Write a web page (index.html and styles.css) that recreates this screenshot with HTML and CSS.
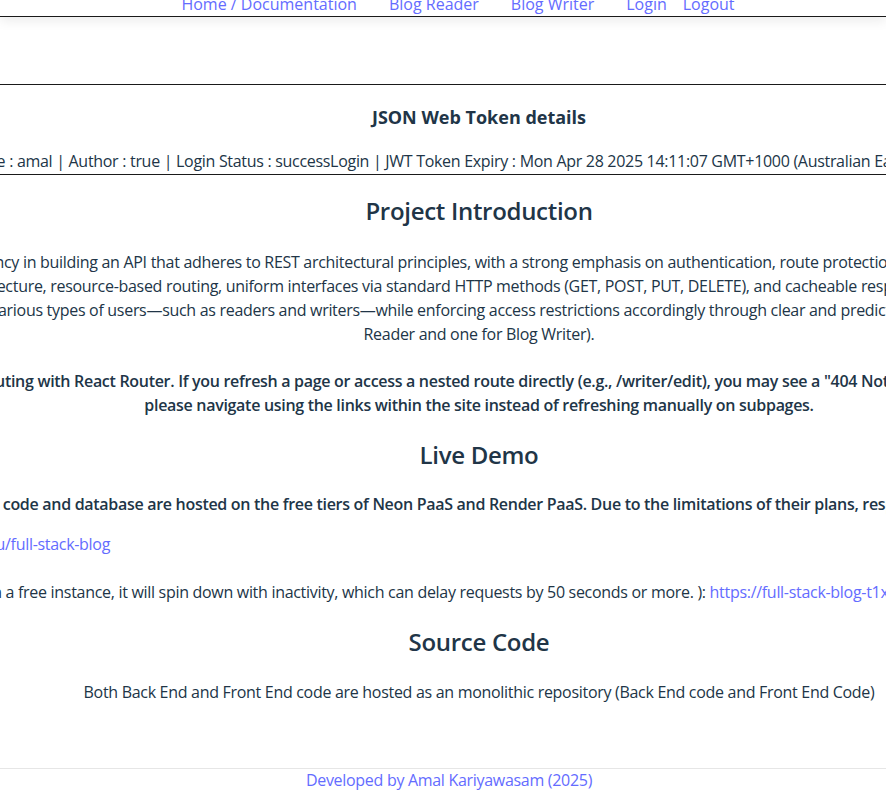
FILE: index.html
```html
<!DOCTYPE html>
<html lang="en">
<head>
<meta charset="utf-8">
<title>Full Stack Blog - Documentation</title>
<link rel="stylesheet" href="styles.css">
</head>
<body>
<nav class="topnav">
  <a href="#">Home / Documentation</a>
  <a href="#">Blog Reader</a>
  <a href="#">Blog Writer</a>
  <span class="auth">
    <a href="#">Login</a>
    <a href="#">Logout</a>
  </span>
</nav>
<div class="spacer"></div>
<section class="jwt">
  <h3 class="jwt-title">JSON Web Token details</h3>
  <div class="jwt-line">Username : amal | Author : true | Login Status : successLogin | JWT Token Expiry : Mon Apr 28 2025 14:11:07 GMT+1000 (Australian Eastern Standard AU)</div>
</section>
<main class="page">
  <h2 class="sec-title first">Project Introduction</h2>
  <div class="para">
    <span class="ln">This project demonstrates my proficiency in building an API that adheres to REST architectural principles, with a strong emphasis on authentication, route protection, and role-based access controls for all of users.</span>
    <span class="ln">The implementation showcases stateless architecture, resource-based routing, uniform interfaces via standard HTTP methods (GET, POST, PUT, DELETE), and cacheable responses with proper status codes and useful error text too.</span>
    <span class="ln">The API supports various types of users—such as readers and writers—while enforcing access restrictions accordingly through clear and predictable endpoints (one for Blog</span>
    <span class="ln">Reader and one for Blog Writer).</span>
  </div>
  <div class="para bold note">
    <span class="ln">Note: This front end uses client-side routing with React Router. If you refresh a page or access a nested route directly (e.g., /writer/edit), you may see a "404 Not Found" error. To avoid seeing this issue entirely,</span>
    <span class="ln">please navigate using the links within the site instead of refreshing manually on subpages.</span>
  </div>

  <h2 class="sec-title">Live Demo</h2>
  <div class="demo">
    <p class="demo-bold">Both the ReactJS front end and back end code and database are hosted on the free tiers of Neon PaaS and Render PaaS. Due to the limitations of their plans, responses may be slow.</p>
    <p class="demo-link">Front End Link : <a href="#">https://amalkariyawasamu/full-stack-blog</a></p>
    <p class="demo-api">Back End API (Note: Since this is hosted on a free instance, it will spin down with inactivity, which can delay requests by 50 seconds or more. ): <a href="#">https://full-stack-blog-t1xq.onrender.com</a></p>
  </div>

  <h2 class="sec-title">Source Code</h2>
  <p class="source">Both Back End and Front End code are hosted as an monolithic repository (Back End code and Front End Code)</p>
</main>
<footer class="footer">
  <a href="#">Developed by Amal Kariyawasam (2025)</a>
</footer>
</body>
</html>
```
FILE: styles.css
```css
html, body {
  margin: 0;
  padding: 0;
  overflow: hidden;
  background: #ffffff;
}
body {
  font-family: "Open Sans", "Noto Sans", sans-serif;
  font-size: 16px;
  line-height: 24px;
  letter-spacing: -0.3px;
  color: #213547;
}
a {
  color: #646cff;
  text-decoration: none;
}
.topnav {
  display: flex;
  justify-content: center;
  gap: 32px;
  margin-top: -8px;
  height: 24px;
  padding-left: 30px;
  letter-spacing: 0;
  border-bottom: 1px solid #1a1a1a;
  box-shadow: 0 4px 12px rgba(0, 0, 0, 0.08);
  position: relative;
}
.topnav .auth {
  display: flex;
  gap: 16px;
}
.spacer {
  height: 67px;
  border-bottom: 1px solid #1a1a1a;
}
.jwt {
  display: flex;
  flex-direction: column;
  align-items: center;
  padding-left: 72px;
  padding-bottom: 1px;
  border-bottom: 1px solid #1a1a1a;
}
.jwt-title {
  margin: 20px 0 0;
  font-size: 18px;
  line-height: 24px;
  font-weight: 700;
  letter-spacing: 0;
}
.jwt-line {
  margin-top: 20px;
  white-space: nowrap;
}
.page {
  display: flex;
  flex-direction: column;
  align-items: center;
  padding-left: 72px;
}
.sec-title {
  margin: 22px 0 0;
  font-size: 24px;
  line-height: 32px;
  font-weight: 600;
}
.sec-title.first {
  margin-top: 20px;
}
.para {
  margin-top: 23px;
  display: flex;
  flex-direction: column;
  align-items: center;
}
.para .ln {
  white-space: nowrap;
}
.bold {
  font-weight: 600;
}
.note {
  margin-top: 23px;
}
.demo {
  width: 1560px;
  text-align: left;
}
.demo p {
  margin: 0;
  white-space: nowrap;
}
.demo .demo-bold {
  font-weight: 600;
  margin-top: 21px;
}
.demo .demo-link {
  margin-top: 16px;
}
.demo .demo-api {
  margin-top: 24px;
}
.source {
  margin: 22px 0 0;
  white-space: nowrap;
}
.footer {
  margin-top: 64px;
  border-top: 1px solid #e6e6e6;
  padding-left: 12px;
  text-align: center;
  line-height: 22px;
}
```
